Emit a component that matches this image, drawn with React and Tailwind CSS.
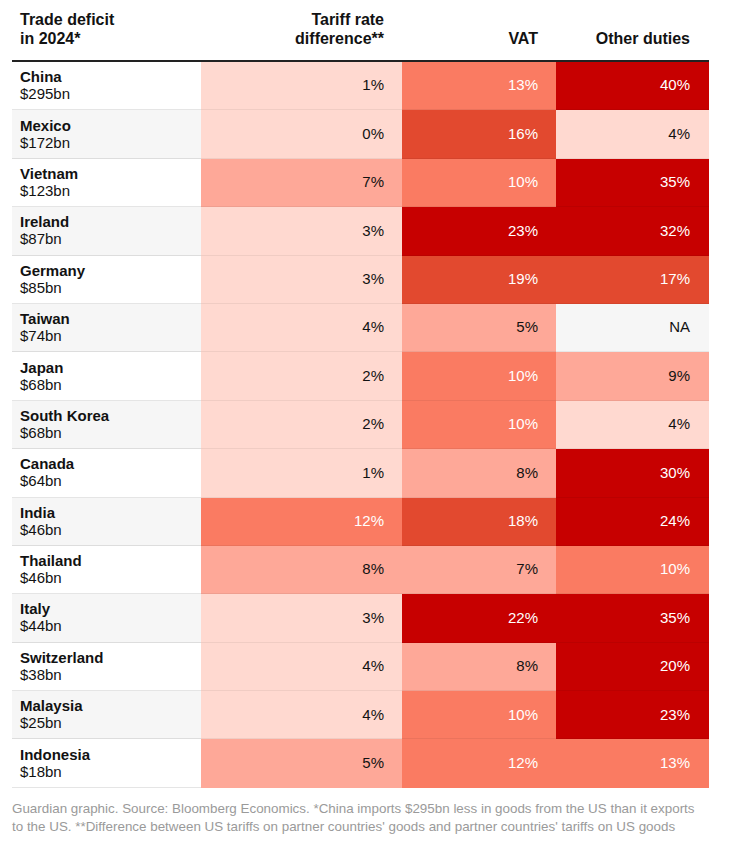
const shades = {
  l1: "bg-[#ffd9d0] text-[#121212]",
  l2: "bg-[#fea898] text-[#121212]",
  mid: "bg-[#fa7b62] text-white",
  strong: "bg-[#e2492f] text-white",
  dark: "bg-[#c70000] text-white",
  na: "bg-[#f6f6f6] text-[#121212]",
};

const rows = [
  ["China", "$295bn", ["1%", "l1"], ["13%", "mid"], ["40%", "dark"]],
  ["Mexico", "$172bn", ["0%", "l1"], ["16%", "strong"], ["4%", "l1"]],
  ["Vietnam", "$123bn", ["7%", "l2"], ["10%", "mid"], ["35%", "dark"]],
  ["Ireland", "$87bn", ["3%", "l1"], ["23%", "dark"], ["32%", "dark"]],
  ["Germany", "$85bn", ["3%", "l1"], ["19%", "strong"], ["17%", "strong"]],
  ["Taiwan", "$74bn", ["4%", "l1"], ["5%", "l2"], ["NA", "na"]],
  ["Japan", "$68bn", ["2%", "l1"], ["10%", "mid"], ["9%", "l2"]],
  ["South Korea", "$68bn", ["2%", "l1"], ["10%", "mid"], ["4%", "l1"]],
  ["Canada", "$64bn", ["1%", "l1"], ["8%", "l2"], ["30%", "dark"]],
  ["India", "$46bn", ["12%", "mid"], ["18%", "strong"], ["24%", "dark"]],
  ["Thailand", "$46bn", ["8%", "l2"], ["7%", "l2"], ["10%", "mid"]],
  ["Italy", "$44bn", ["3%", "l1"], ["22%", "dark"], ["35%", "dark"]],
  ["Switzerland", "$38bn", ["4%", "l1"], ["8%", "l2"], ["20%", "dark"]],
  ["Malaysia", "$25bn", ["4%", "l1"], ["10%", "mid"], ["23%", "dark"]],
  ["Indonesia", "$18bn", ["5%", "l2"], ["12%", "mid"], ["13%", "mid"]],
];

export default function App() {
  return (
    <div className="w-[732px] h-[850px] bg-white font-['Liberation_Sans',Arial,sans-serif] text-[#121212]">
      <div className="mx-3 w-[697px]">
        {/* Header */}
        <div className="grid grid-cols-[189px_201px_154px_153px] border-b-2 border-[#222222] pt-[10px] pb-[12px] text-[16px] leading-[19px] font-bold">
          <div className="pl-2">
            Trade deficit
            <br />
            in 2024*
          </div>
          <div className="pr-[18px] text-right">
            Tariff rate
            <br />
            difference**
          </div>
          <div className="pr-[18px] text-right flex items-end justify-end">VAT</div>
          <div className="pr-[19px] text-right flex items-end justify-end">Other duties</div>
        </div>

        {/* Body */}
        {rows.map(([name, deficit, ...cells], i) => (
          <div
            key={name}
            className="grid grid-cols-[189px_201px_154px_153px] h-[48.4px]"
          >
            <div
              className={`flex flex-col justify-center pl-2 border-b border-black/10 ${
                i % 2 === 1 ? "bg-[#f6f6f6]" : "bg-white"
              }`}
            >
              <span className="text-[15px] leading-[17px] font-bold">{name}</span>
              <span className="text-[15px] leading-[18px]">{deficit}</span>
            </div>
            {cells.map(([value, shade], j) => (
              <div
                key={j}
                className={`flex items-center justify-end text-[15px] border-b border-black/[0.06] ${
                  j === 2 ? "pr-[19px]" : "pr-[18px]"
                } ${i === rows.length - 1 ? "border-b-transparent" : ""} ${shades[shade]}`}
              >
                {value}
              </div>
            ))}
          </div>
        ))}

        {/* Footer */}
        <p className="mt-[12px] text-[13.4px] leading-[18px] text-[#9a9a9a]">
          Guardian graphic. Source: Bloomberg Economics. *China imports $295bn less in goods from the US than it exports
          <br />
          to the US. **Difference between US tariffs on partner countries' goods and partner countries' tariffs on US goods
        </p>
      </div>
    </div>
  );
}
